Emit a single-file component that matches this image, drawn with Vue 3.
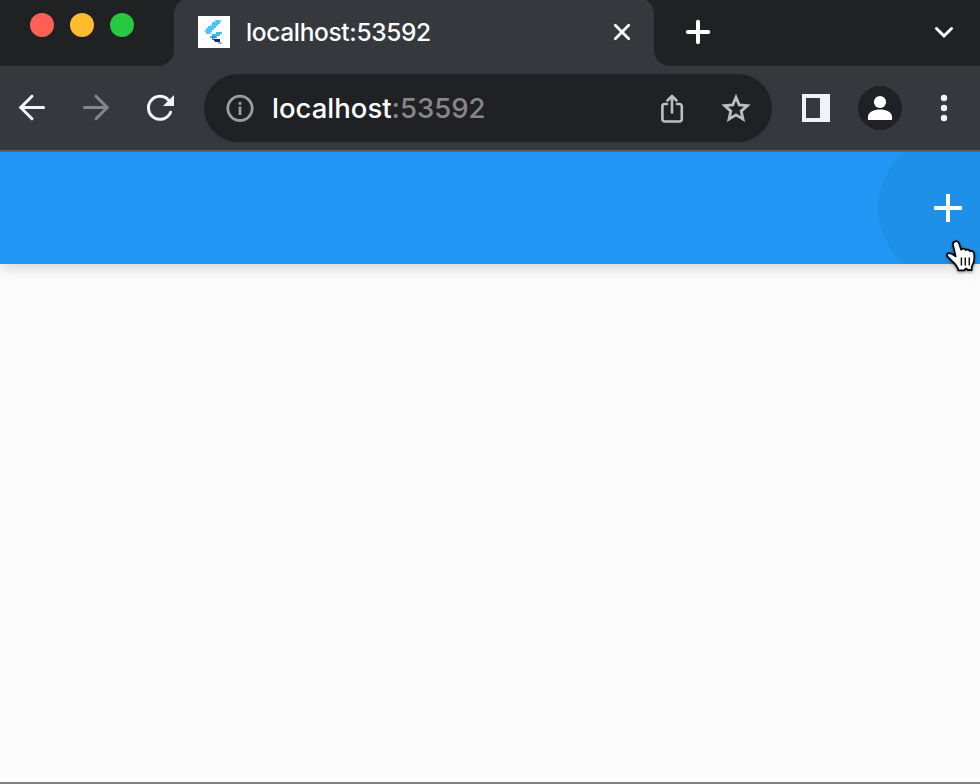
<script setup>
const host = 'localhost'
const port = ':53592'
</script>

<template>
  <div class="window">
    <header class="tabstrip">
      <div class="lights">
        <span class="light red"></span>
        <span class="light yellow"></span>
        <span class="light green"></span>
      </div>
      <div class="tab">
        <svg class="favicon" viewBox="0 0 32 32" shape-rendering="crispEdges">
          <rect width="32" height="32" fill="#fff" />
          <path fill="#4fc3f7" d="M18 4h6v2h-2v2h-2v2h-2v2h-2v2h-2v2h-2v2H8v-2H6v-2h2v-2h2v-2h2V8h2V6h4z" />
          <path fill="#a9e2fc" d="M22 4h2v2h-2zM16 4h2v2h-2zM6 14h2v2H6zM12 8h2v2h-2zM12 16h2v2h-2z" />
          <path fill="#42b8ef" d="M18 16h6v2h-2v2h-3v2h-3v2h-2v-2h-2v-2h2v-2h4z" />
          <path fill="#199be5" d="M14 20h4v2h-2v2h-2z" />
          <path fill="#062f82" d="M16 23h6v3h-5v-1h-1z" />
          <path fill="#a9adc5" d="M20 26h4v2h-4z" />
        </svg>
        <span class="title">{{ host + port }}</span>
        <svg class="close" viewBox="0 0 20 20"><path d="M3.3 3.3l13.4 13.4M16.7 3.3L3.3 16.7" /></svg>
      </div>
      <div class="rest">
        <svg class="new-tab" viewBox="0 0 28 28"><path d="M14 3.8v20.4M3.8 14h20.4" /></svg>
        <svg class="chevron" viewBox="0 0 24 24"><path d="M4.500 8.500l7.500 7.500 7.500-7.500" /></svg>
      </div>
    </header>

    <nav class="toolbar">
      <svg class="nav back" viewBox="0 0 32 32"><path d="M27.600 15.500H4.700M16 4.200L4.700 15.500 16 26.800" /></svg>
      <svg class="nav forward" viewBox="0 0 32 32"><path d="M4.400 15.500h22.900M16 4.200l11.300 11.300L16 26.800" /></svg>
      <svg class="nav reload" viewBox="0 0 32 32">
        <path d="M26.600 20.200A11.500 11.500 0 1 1 24.400 8" />
        <path class="head" d="M30 3v11H19z" />
      </svg>
      <div class="omnibox">
        <svg class="info" viewBox="0 0 28 28">
          <circle cx="14" cy="14.300" r="12.200" fill="none" stroke="#9b9c9f" stroke-width="2.800" />
          <path fill="#9b9c9f" d="M12.600 8h2.800v2.800h-2.800zM12.600 12.600h2.800v8.400h-2.800z" />
        </svg>
        <span class="url">{{ host }}<span class="port">{{ port }}</span></span>
        <svg class="share" viewBox="0 0 32 32">
          <path d="M11 12H8.700a2.300 2.300 0 0 0-2.300 2.300v12.900a2.300 2.300 0 0 0 2.300 2.300h14.800a2.300 2.300 0 0 0 2.300-2.300V14.300a2.300 2.300 0 0 0-2.300-2.300H21M16 20.500V4.500M11.500 8.500L16 4l4.500 4.500" />
        </svg>
        <svg class="star" viewBox="0 0 32 32">
          <path d="M16 5.300l3.200 7.600 8.200.7-6.200 5.500 1.800 8-7-4.200-7 4.200 1.800-8-6.200-5.500 8.200-.7z" />
        </svg>
      </div>
      <svg class="panel" viewBox="0 0 28 28"><path fill="#f0f2f5" fill-rule="evenodd" d="M0 0h28v28H0zM4 4v20h14V4z" /></svg>
      <svg class="profile" viewBox="0 0 44 44">
        <circle cx="22" cy="22" r="22" fill="#202124" />
        <circle cx="22" cy="16" r="6.100" fill="#fff" />
        <path fill="#fff" d="M10 34v-3.500c0-4.600 6.500-7 12-7s12 2.400 12 7V34z" />
      </svg>
      <svg class="menu" viewBox="0 0 8 28">
        <circle cx="4" cy="4" r="3.200" /><circle cx="4" cy="14" r="3.200" /><circle cx="4" cy="24" r="3.200" />
      </svg>
    </nav>

    <main class="page">
      <div class="appbar">
        <span class="ripple"></span>
        <svg class="add" viewBox="0 0 28 28"><path d="M12 0h4v12h12v4H16v12h-4V16H0v-4h12z" fill="#fff" /></svg>
      </div>
    </main>

    <svg class="cursor" viewBox="0 0 36 40">
      <path
        d="M11.300 5.300C13 4.700 14.400 5.600 15 7.300L17.200 13.600C18.200 12.300 20.800 12.400 21.700 14.100C23.100 13 25.300 13.400 26 15.200C28 14.400 30.100 15.600 30.200 18L30.300 22.500C30.300 26 28.800 28.500 27.700 31V34H23.700L22 32.500L20.200 34.300H14.300C13.700 30.500 10.600 27.400 7.900 25L3.800 20.900C2.400 19.500 2.900 17.700 4.500 17.200C6.300 16.700 8.400 17.900 11.600 20.400L9 9C8.500 7 9.400 5.900 11.300 5.300Z"
        fill="#fff" stroke="#080808" stroke-width="1.800" stroke-linejoin="round"
      />
      <path d="M17.400 21.500v8M21.300 21.500v8M25.300 21.500v8" stroke="#111" stroke-width="1.500" />
    </svg>
  </div>
</template>

<style>
body { margin: 0; }
</style>

<style scoped>
.window {
  position: relative;
  display: flex;
  flex-direction: column;
  width: 980px;
  height: 784px;
  box-sizing: border-box;
  overflow: hidden;
  background: #fcfcfc;
  border-bottom: 2px solid #828282;
  font-family: Inter, "Liberation Sans", sans-serif;
  font-weight: 500;
}
svg { display: block; flex: none; fill: none; }
.tabstrip {
  display: flex;
  height: 66px;
  overflow: hidden;
  background: linear-gradient(#202123 0 20px, #35383d 20px);
}
.lights {
  display: flex;
  gap: 16px;
  box-sizing: border-box;
  width: 174px;
  padding: 13px 0 0 30px;
  background: #202123;
  border-bottom-right-radius: 16px;
}
.light { width: 24px; height: 24px; border-radius: 50%; }
.red { background: #ff5f57; }
.yellow { background: #febc2e; }
.green { background: #28c840; }
.tab {
  display: flex;
  align-items: center;
  box-sizing: border-box;
  width: 480px;
  height: 70px;
  margin-top: -2px;
  padding: 0 22px 2px 24px;
  background: #35383d;
  border-radius: 16px 16px 0 0;
}
.favicon { width: 32px; height: 32px; }
.title {
  flex: 1;
  margin-left: 16px;
  color: #fff;
  font-size: 24.500px;
  line-height: 32px;
  letter-spacing: -0.350px;
}
.close { width: 20px; height: 20px; stroke: #fff; stroke-width: 2.800; stroke-linecap: round; }
.rest {
  display: flex;
  flex: 1;
  justify-content: space-between;
  align-items: center;
  box-sizing: border-box;
  padding: 0 24px 2px 30px;
  background: #202123;
  border-bottom-left-radius: 16px;
}
.new-tab { width: 28px; height: 28px; stroke: #fff; stroke-width: 4; stroke-linecap: round; }
.chevron { width: 24px; height: 24px; stroke: #fff; stroke-width: 3; stroke-linecap: round; }
.toolbar {
  display: flex;
  align-items: center;
  box-sizing: border-box;
  height: 86px;
  padding: 0 32px 0 16px;
  background: #35383d;
  border-bottom: 2px solid #5f5f60;
}
.nav { width: 32px; height: 32px; margin-right: 32px; stroke: #f2f4f7; stroke-width: 3; stroke-linecap: round; }
.forward { stroke: #85878a; }
.reload { margin-right: 28px; }
.reload .head { fill: #f2f4f7; stroke: none; }
.omnibox {
  display: flex;
  align-items: center;
  box-sizing: border-box;
  width: 568px;
  height: 68px;
  padding: 0 20px 0 22px;
  border-radius: 34px;
  background: #202124;
}
.info { width: 28px; height: 28px; }
.url {
  flex: 1;
  margin-left: 18px;
  color: #fff;
  font-size: 27.500px;
  line-height: 36px;
}
.port { color: #85878a; }
.share, .star { width: 32px; height: 32px; stroke: #bdbec1; stroke-width: 2.800; }
.share { stroke-width: 2.600; stroke-linecap: round; stroke-linejoin: round; }
.star { margin-left: 32px; }
.panel { width: 28px; height: 28px; margin-left: 30px; }
.profile { width: 44px; height: 44px; margin-left: 28px; }
.menu { width: 8px; height: 28px; margin-left: 38px; fill: #f0f2f5; }
.page { flex: 1; background: #fcfcfc; }
.appbar {
  position: relative;
  display: flex;
  align-items: center;
  justify-content: flex-end;
  box-sizing: border-box;
  height: 112px;
  padding-right: 18px;
  background: #2196f5;
  box-shadow: 0 4px 14px rgba(0, 0, 0, 0.160);
  clip-path: inset(0 0 -24px 0);
}
.ripple {
  position: absolute;
  right: 0;
  top: 0;
  width: 102px;
  height: 112px;
  background: radial-gradient(circle at 70px 56px, #1f90e8 69.500px, transparent 70.500px);
}
.add { position: relative; width: 28px; height: 28px; }
.cursor {
  position: absolute;
  left: 944px;
  top: 236px;
  width: 36px;
  height: 40px;
  filter: drop-shadow(0 1.500px 1.500px rgba(0, 0, 0, 0.450));
}
</style>
